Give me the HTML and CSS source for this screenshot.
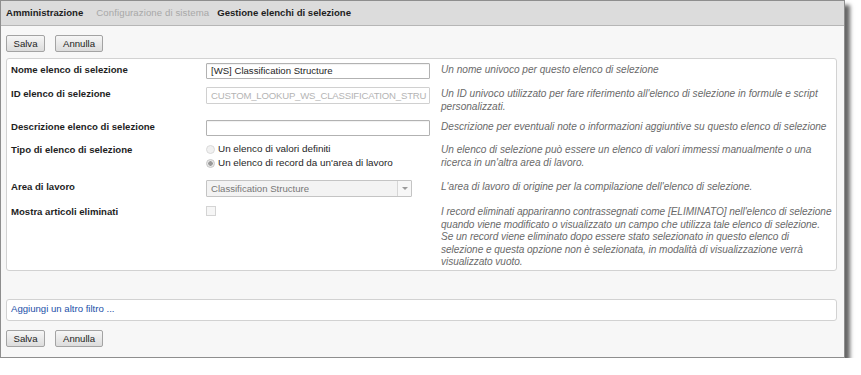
FILE: index.html
```html
<!DOCTYPE html>
<html lang="it">
<head>
<meta charset="utf-8">
<title>Gestione elenchi di selezione</title>
<link rel="stylesheet" href="styles.css">
</head>
<body>
<div class="window">
  <div class="header">
    <span class="crumb crumb-first">Amministrazione</span>
    <span class="crumb crumb-muted">Configurazione di sistema</span>
    <span class="crumb">Gestione elenchi di selezione</span>
  </div>
  <div class="toolbar">
    <button class="btn btn-save">Salva</button>
    <button class="btn btn-cancel">Annulla</button>
  </div>
  <div class="panel">
    <div class="label">Nome elenco di selezione</div>
    <div class="field"><div class="input">[WS] Classification Structure</div></div>
    <div class="desc">Un nome univoco per questo elenco di selezione</div>

    <div class="label">ID elenco di selezione</div>
    <div class="field"><div class="input input-disabled">CUSTOM_LOOKUP_WS_CLASSIFICATION_STRU</div></div>
    <div class="desc">Un ID univoco utilizzato per fare riferimento all'elenco di selezione in formule e script personalizzati.</div>

    <div class="label">Descrizione elenco di selezione</div>
    <div class="field"><div class="input"></div></div>
    <div class="desc">Descrizione per eventuali note o informazioni aggiuntive su questo elenco di selezione</div>

    <div class="label">Tipo di elenco di selezione</div>
    <div class="field radios">
      <div class="radio-row"><span class="radio"></span><span>Un elenco di valori definiti</span></div>
      <div class="radio-row"><span class="radio radio-on"></span><span>Un elenco di record da un'area di lavoro</span></div>
    </div>
    <div class="desc">Un elenco di selezione può essere un elenco di valori immessi manualmente o una ricerca in un'altra area di lavoro.</div>

    <div class="label">Area di lavoro</div>
    <div class="field">
      <div class="select"><span class="select-text">Classification Structure</span><span class="select-arrow"><span class="tri"></span></span></div>
    </div>
    <div class="desc">L'area di lavoro di origine per la compilazione dell'elenco di selezione.</div>

    <div class="label">Mostra articoli eliminati</div>
    <div class="field"><span class="checkbox"></span></div>
    <div class="desc desc-long">I record eliminati appariranno contrassegnati come [ELIMINATO] nell'elenco di selezione<br>quando viene modificato o visualizzato un campo che utilizza tale elenco di selezione.<br>Se un record viene eliminato dopo essere stato selezionato in questo elenco di<br>selezione e questa opzione non è selezionata, in modalità di visualizzazione verrà<br>visualizzato vuoto.</div>
  </div>
  <div class="filter"><a class="filter-link" href="#">Aggiungi un altro filtro ...</a></div>
  <div class="toolbar toolbar-bottom">
    <button class="btn btn-save">Salva</button>
    <button class="btn btn-cancel">Annulla</button>
  </div>
</div>
</body>
</html>
```

FILE: styles.css
```css
* { box-sizing: border-box; }

html, body {
  margin: 0;
  padding: 0;
  background: #ffffff;
}

body {
  font-family: "Liberation Sans", Arial, sans-serif;
  font-size: 9.6px;
  line-height: 12.5px;
  color: #222;
}

.window {
  width: 845px;
  height: 358px;
  border: 1px solid #8e8e8e;
  background: #f7f7f7;
  box-shadow: 5px 5px 4px rgba(0, 0, 0, 0.6);
  display: flex;
  flex-direction: column;
}

.header {
  height: 25px;
  background: #dcdcdc;
  border-bottom: 1px solid #b6b6b6;
  display: flex;
  align-items: center;
  padding-left: 5px;
  padding-top: 1px;
}

.crumb {
  font-weight: bold;
  color: #1e1e1e;
}

.crumb-first { margin-right: 13px; }

.crumb-muted {
  font-weight: normal;
  color: #a8a8a8;
  margin-right: 8px;
  letter-spacing: 0.1px;
}

.toolbar {
  display: flex;
  gap: 10px;
  padding-left: 5px;
  margin-top: 9px;
}

.btn {
  font-family: "Liberation Sans", Arial, sans-serif;
  font-size: 9.6px;
  color: #222;
  height: 17px;
  padding: 0;
  border: 1px solid #a3a3a3;
  border-radius: 2px;
  background: linear-gradient(#f6f6f6, #dcdcdc);
}

.btn-save { width: 39px; }
.btn-cancel { width: 48px; }

.panel {
  margin: 6px 7px 0 5px;
  background: #ffffff;
  border: 1px solid #d2d2d2;
  border-radius: 3px;
  padding: 4px 0 1px 4px;
  display: grid;
  grid-template-columns: 184px 224px 1fr;
  grid-template-rows: 24px 33px 23px 37px 25px auto;
  column-gap: 11px;
  align-items: start;
}

.label {
  font-weight: bold;
  color: #1e1e1e;
  padding-top: 1px;
}

.desc {
  font-style: italic;
  font-size: 10.1px;
  color: #6a6a6a;
  padding-top: 1px;
  padding-right: 3px;
}

.desc-long {
  padding-right: 0;
  white-space: nowrap;
  letter-spacing: -0.05px;
}

.field { min-width: 0; }

.input {
  height: 16px;
  border: 1px solid #b2b2b2;
  border-radius: 1px;
  background: #fff;
  padding: 0 4px;
  line-height: 14px;
  white-space: nowrap;
  overflow: hidden;
  color: #1e1e1e;
  box-shadow: inset 0 1px 1px rgba(0, 0, 0, 0.06);
}

.input-disabled {
  height: 17px;
  line-height: 15px;
  border-color: #d0d0d0;
  color: #b4b4b4;
  box-shadow: none;
  padding-right: 0;
  letter-spacing: -0.2px;
}

.radios {
  display: flex;
  flex-direction: column;
  font-size: 9.9px;
}

.radio-row {
  display: flex;
  align-items: center;
  height: 15px;
  margin-top: -1px;
  color: #1e1e1e;
}

.radio {
  width: 9px;
  height: 9px;
  border-radius: 50%;
  border: 1px solid #dadada;
  background: #f1f1f1;
  margin-right: 3px;
  flex: none;
}

.radio-on {
  border-color: #c6c6c6;
  background: radial-gradient(circle, #9a9a9a 0 2px, #e8e8e8 2.5px);
}

.select {
  width: 206px;
  height: 17px;
  border: 1px solid #c4c4c4;
  border-radius: 1px;
  background: #f3f3f3;
  display: flex;
  align-items: stretch;
}

.select-text {
  flex: 1;
  padding-left: 4px;
  line-height: 15px;
  color: #777;
}

.select-arrow {
  width: 14px;
  border-left: 1px solid #d6d6d6;
  background: #f7f7f7;
  display: flex;
  align-items: center;
  justify-content: center;
}

.tri {
  width: 0;
  height: 0;
  border-left: 3px solid transparent;
  border-right: 3px solid transparent;
  border-top: 3px solid #9a9a9a;
}

.checkbox {
  display: block;
  width: 10px;
  height: 10px;
  border: 1px solid #d4d4d4;
  background: #f6f6f6;
  margin-top: 1px;
}

.filter {
  margin: 28px 7px 0 5px;
  height: 22px;
  background: #ffffff;
  border: 1px solid #d2d2d2;
  border-radius: 3px;
  display: flex;
  align-items: center;
  padding-left: 4px;
}

.filter-link {
  color: #2450a8;
  text-decoration: none;
}

.toolbar-bottom { margin-top: 9px; }
```
